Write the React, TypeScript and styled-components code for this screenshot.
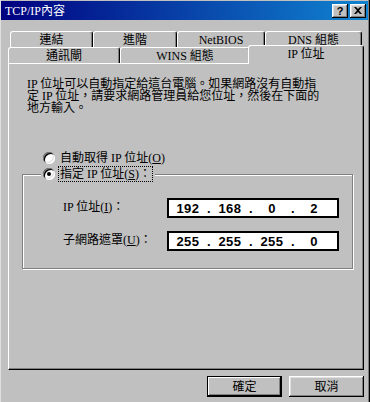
import React from "react";
import styled, { createGlobalStyle } from "styled-components";

const GlobalStyle = createGlobalStyle`
  html, body {
    margin: 0;
    padding: 0;
    background: #c0c0c0;
  }
  body {
    font-family: "Liberation Serif", "Noto Sans CJK TC", serif;
    font-size: 12px;
    color: #000;
  }
`;

type TabDef = { label: string; width: number; active?: boolean };

const backTabs: TabDef[] = [
  { label: "連結", width: 83 },
  { label: "進階", width: 84 },
  { label: "NetBIOS", width: 88 },
  { label: "DNS 組態", width: 97 },
];

const frontTabs: TabDef[] = [
  { label: "通訊閘", width: 112 },
  { label: "WINS 組態", width: 130 },
  { label: "IP 位址", width: 116, active: true },
];

const ipRows = [
  { label: "IP 位址", key: "I", value: ["192", "168", "0", "2"] },
  { label: "子網路遮罩", key: "U", value: ["255", "255", "255", "0"] },
];

const App: React.FC = () => {
  return (
    <>
      <GlobalStyle />
      <Window>
        <TitleBar>
          <TitleText>TCP/IP內容</TitleText>
          <TitleButtons>
            <TitleButton>?</TitleButton>
            <TitleButton>
              <svg width="8" height="7" viewBox="0 0 8 7">
                <path d="M0 0h2l2 2 2-2h2L5 3.5 8 7H6L4 5 2 7H0l3-3.5z" fill="#000" />
              </svg>
            </TitleButton>
          </TitleButtons>
        </TitleBar>
        <Body>
          <TabRow $offset={2}>
            {backTabs.map((t) => (
              <Tab key={t.label} $w={t.width}>
                {t.label}
              </Tab>
            ))}
          </TabRow>
          <TabRow $offset={0}>
            {frontTabs.map((t) => (
              <Tab key={t.label} $w={t.width} $active={t.active}>
                {t.label}
              </Tab>
            ))}
          </TabRow>
          <Panel>
            <Description>
              <Line>IP 位址可以自動指定給這台電腦。如果網路沒有自動指</Line>
              <Line>定 IP 位址，請要求網路管理員給您位址，然後在下面的</Line>
              <Line>地方輸入。</Line>
            </Description>
            <RadioRow>
              <Radio />
              <span>
                自動取得 IP 位址(<Accel>O</Accel>)
              </span>
            </RadioRow>
            <Group>
              <GroupLegend>
                <Radio $checked />
                <FocusLabel>
                  指定 IP 位址(<Accel>S</Accel>)：
                </FocusLabel>
              </GroupLegend>
              <GroupBody>
                {ipRows.map((row) => (
                  <FieldRow key={row.key}>
                    <FieldLabel>
                      {row.label}(<Accel>{row.key}</Accel>)：
                    </FieldLabel>
                    <IpBox>
                      {row.value.map((part, i) => (
                        <React.Fragment key={i}>
                          {i > 0 && <IpDot>.</IpDot>}
                          <IpPart>{part}</IpPart>
                        </React.Fragment>
                      ))}
                    </IpBox>
                  </FieldRow>
                ))}
              </GroupBody>
            </Group>
          </Panel>
          <ButtonRow>
            <Button $default>確定</Button>
            <Button>取消</Button>
          </ButtonRow>
        </Body>
      </Window>
    </>
  );
};

export default App;

const Window = styled.div`
  box-sizing: border-box;
  width: 370px;
  height: 402px;
  padding: 1px 2px 0 1px;
  background: #c0c0c0;
  box-shadow: inset 1px 0 #dfdfdf, inset -1px 0 #000, inset -2px 0 #808080;
  display: flex;
  flex-direction: column;
`;

const TitleBar = styled.div`
  height: 19px;
  display: flex;
  align-items: center;
  justify-content: space-between;
  padding: 0 2px 0 4px;
  background: linear-gradient(90deg, #000080, #1084d0);
  color: #fff;
`;

const TitleText = styled.span`
  font-size: 12px;
  line-height: 12px;
`;

const TitleButtons = styled.div`
  display: flex;
  gap: 2px;
`;

const TitleButton = styled.div`
  box-sizing: border-box;
  width: 16px;
  height: 14px;
  display: flex;
  align-items: center;
  justify-content: center;
  background: #c0c0c0;
  color: #000;
  font-family: "Liberation Sans", sans-serif;
  font-weight: bold;
  font-size: 11px;
  box-shadow: inset -1px -1px #000, inset 1px 1px #fff, inset -2px -2px #808080,
    inset 2px 2px #dfdfdf;
`;

const Body = styled.div`
  display: flex;
  flex-direction: column;
  padding: 11px 4px 0 7px;
`;

const TabRow = styled.div<{ $offset: number }>`
  display: flex;
  align-items: flex-end;
  height: 16px;
  padding-left: ${(p) => p.$offset}px;
`;

const Tab = styled.div<{ $w: number; $active?: boolean }>`
  box-sizing: border-box;
  width: ${(p) => p.$w}px;
  height: ${(p) => (p.$active ? 19 : 16)}px;
  margin-left: ${(p) => (p.$active ? -2 : 0)}px;
  margin-bottom: ${(p) => (p.$active ? -1 : 0)}px;
  padding-bottom: ${(p) => (p.$active ? 3 : 0)}px;
  border: 1px solid #fff;
  border-right-color: #000;
  border-bottom: none;
  border-radius: 3px 3px 0 0;
  box-shadow: inset -1px 0 #808080;
  background: #c0c0c0;
  display: flex;
  align-items: center;
  justify-content: center;
  line-height: 12px;
  position: relative;
  z-index: ${(p) => (p.$active ? 2 : 1)};
`;

const Panel = styled.div`
  box-sizing: border-box;
  width: 356px;
  height: 307px;
  border: 1px solid #fff;
  border-right-color: #000;
  border-bottom-color: #000;
  box-shadow: inset -1px -1px #808080;
  padding: 14px 0 0 18px;
  display: flex;
  flex-direction: column;
  align-items: flex-start;
`;

const Description = styled.div`
  display: flex;
  flex-direction: column;
`;

const Line = styled.span`
  height: 12px;
  line-height: 12px;
  white-space: nowrap;
`;

const Accel = styled.span`
  text-decoration: underline;
`;

const RadioRow = styled.div`
  display: flex;
  align-items: center;
  gap: 5px;
  height: 14px;
  margin: 37px 0 0 16px;
  line-height: 12px;
`;

const Radio = styled.span<{ $checked?: boolean }>`
  position: relative;
  flex: none;
  width: 12px;
  height: 12px;
  border-radius: 50%;
  background: #fff;
  box-shadow: inset 1px 1px #808080, inset -1px -1px #fff, inset 2px 2px #000,
    inset -2px -2px #dfdfdf;

  &::after {
    content: "";
    display: ${(p) => (p.$checked ? "block" : "none")};
    position: absolute;
    left: 4px;
    top: 4px;
    width: 4px;
    height: 4px;
    border-radius: 50%;
    background: #000;
  }
`;

const Group = styled.fieldset`
  box-sizing: border-box;
  width: 331px;
  margin: 1px 0 0 -5px;
  padding: 0;
  border: 1px solid #808080;
  box-shadow: inset 1px 1px #fff, 1px 1px #fff;
`;

const GroupLegend = styled.legend`
  display: flex;
  align-items: center;
  gap: 3px;
  margin-left: 18px;
  padding: 0 2px;
  height: 16px;
  background: #c0c0c0;
  line-height: 12px;
`;

const FocusLabel = styled.span`
  border: 1px dotted #000;
  padding: 1px 1px;
`;

const GroupBody = styled.div`
  display: flex;
  flex-direction: column;
  gap: 13px;
  padding: 16px 0 17px 40px;
`;

const FieldRow = styled.div`
  display: flex;
  align-items: center;
  height: 20px;
`;

const FieldLabel = styled.span`
  width: 104px;
  line-height: 12px;
  margin-top: -3px;
`;

const IpBox = styled.div`
  box-sizing: border-box;
  width: 172px;
  height: 20px;
  border: 2px solid #000;
  background: #fff;
  display: flex;
  align-items: center;
  padding-left: 1px;
  font-family: "Liberation Sans", sans-serif;
  font-weight: bold;
  font-size: 13px;
  letter-spacing: 0.5px;
`;

const IpPart = styled.span`
  width: 36px;
  text-align: center;
`;

const IpDot = styled.span`
  width: 6px;
  text-align: center;
`;

const ButtonRow = styled.div`
  display: flex;
  justify-content: flex-end;
  gap: 7px;
  margin-top: 6px;
`;

const Button = styled.div<{ $default?: boolean }>`
  box-sizing: border-box;
  width: 75px;
  height: 21px;
  display: flex;
  align-items: center;
  justify-content: center;
  background: #c0c0c0;
  line-height: 12px;
  border: ${(p) => (p.$default ? "1px solid #000" : "none")};
  box-shadow: ${(p) =>
    p.$default
      ? "inset -1px -1px #000, inset 1px 1px #fff, inset -2px -2px #808080"
      : "inset -1px -1px #000, inset 1px 1px #fff, inset -2px -2px #808080, inset 2px 2px #dfdfdf"};
`;
